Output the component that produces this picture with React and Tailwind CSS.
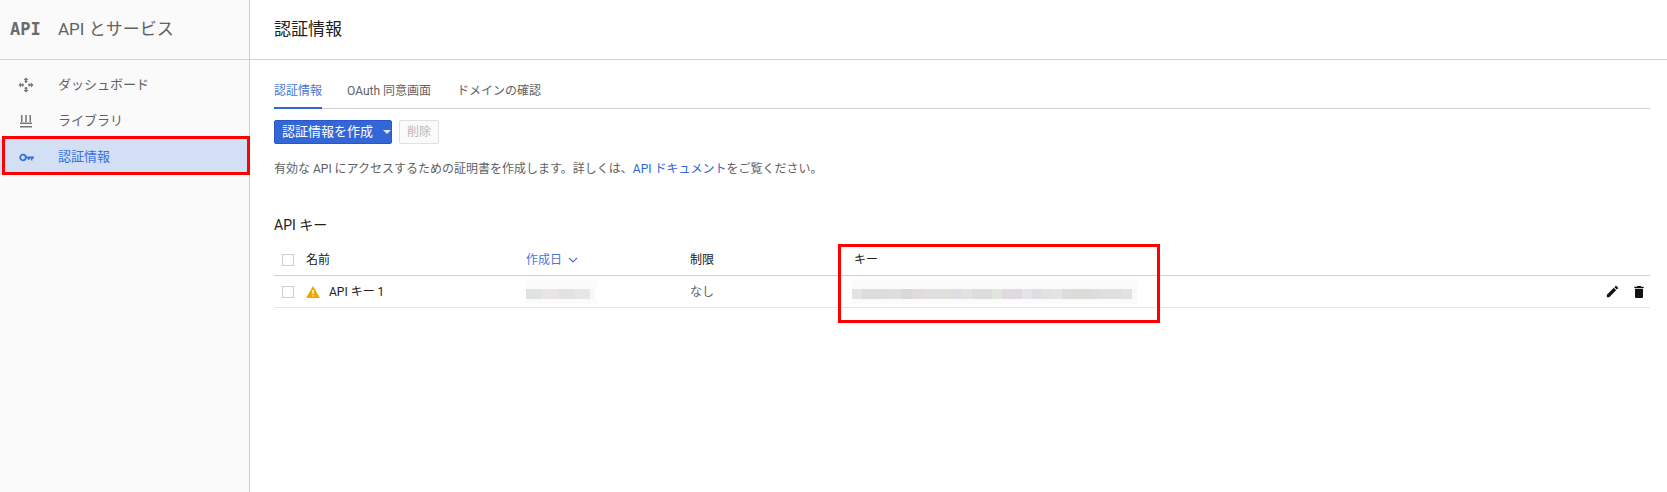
import React from "react";

const font = { };

const keyCells = ["#e3e3e3","#dcdcdc","#dcdcdc","#dddddd","#dedede","#d8d8d8","#dfdce0","#e1dedd","#e0e0de","#dfdfdd","#e0dce2","#e2e2e2","#dcdcdc","#dcdcdc","#e2e4de","#e0d9dd","#dedbe0","#e6e4e6","#e0dde2","#e1e3e3","#e3e5e3","#dcdcdc","#dcdbd7","#dadcdb","#dddddd","#dfdfdf","#dfdfdf","#e2e2e2"];
const dateCells = ["#dde2e2","#dde2e2","#e9e5e5","#e9e5e5","#e2e2e0","#e2e2e0","#e8e6e5","#e8e6e5"];

function Blur({ cells, cell, halo }) {
  return (
    <div className="relative flex flex-col">
      <div className={`${halo} h-[10px] bg-[#fbfbfb]`} />
      <div className="flex h-[10px]">
        {cells.map((c, i) => (
          <div key={i} className="h-full shrink-0" style={{ width: cell, background: c }} />
        ))}
        <div className="w-[5px] h-full bg-[#f8f8f8]" />
      </div>
      <div className={`${halo} h-[5px] bg-[#fbfbfb]`} />
    </div>
  );
}

function Check() {
  return <div className="w-[12px] h-[12px] border border-[#d0d0d0] bg-white shrink-0" />;
}

function NavItem({ icon, label, active }) {
  return (
    <div className={`h-[36px] flex items-center ${active ? "bg-[#d2dff5] text-[#3b6fd8]" : "text-[#616161]"}`}>
      <div className="w-[58px] flex justify-center pl-[0px]">{icon}</div>
      <span className="text-[13px]">{label}</span>
    </div>
  );
}

export default function App() {
  return (
    <div
      className="relative w-[1667px] h-[492px] overflow-hidden bg-white flex text-[#212121]"
      style={{ fontFamily: 'Roboto, "Noto Sans CJK JP", sans-serif' }}
    >
      <aside className="w-[250px] shrink-0 bg-[#fafafa] border-r border-[#d0d0d0] flex flex-col">
        <div className="h-[60px] border-b border-[#d0d0d0] flex items-center pl-[10px]">
          <span
            className="w-[34px] text-[17px] font-bold text-[#6b6b6b] tracking-[0px]"
            style={{ fontFamily: '"DejaVu Sans Mono", monospace' }}
          >
            API
          </span>
          <span className="ml-[14px] text-[17px] text-[#616161]">API とサービス</span>
        </div>
        <nav className="flex flex-col pt-[7px]">
          <div className="h-[36px]">
            <NavItem
              label="ダッシュボード"
              icon={
                <svg width="16" height="16" viewBox="0 0 16 16" fill="#757575" className="-ml-[6px]">
                  <path d="M8 .5 10.5 3h-5zM8 15.5 5.500 13h5zM.5 8 3 5.500v5zM15.500 8 13 10.500v-5z" />
                  <circle cx="8" cy="4.500" r="1.400" />
                  <circle cx="8" cy="11.500" r="1.400" />
                  <circle cx="4.500" cy="8" r="1.400" />
                  <circle cx="11.500" cy="8" r="1.400" />
                </svg>
              }
            />
          </div>
          <NavItem
            label="ライブラリ"
            icon={
              <svg width="14" height="14" viewBox="0 0 14 14" fill="#757575" className="-ml-[6px]">
                <path d="M2 1h1.500v7H2zM6.250 1h1.500v7h-1.500zM10.500 1H12v7h-1.500zM1 8.500h12V10H1zM1 12h12v1.500H1z" />
              </svg>
            }
          />
          <NavItem
            active
            label="認証情報"
            icon={
              <svg width="15" height="9" viewBox="0 0 15 9" fill="none" className="-ml-[6px]">
                <circle cx="4" cy="4.500" r="2.800" stroke="#3b6fd8" strokeWidth="1.800" />
                <path d="M6.500 3.500H15v2h-1.500V7.500H12V5.500h-1.500V7H9V5.500H6.500z" fill="#3b6fd8" />
              </svg>
            }
          />
        </nav>
      </aside>

      <main className="flex-1 flex flex-col min-w-0">
        <header className="h-[60px] shrink-0 border-b border-[#d0d0d0] flex items-center pl-[24px]">
          <h1 className="text-[17px] text-[#212121]">認証情報</h1>
        </header>

        <div className="pl-[24px] pr-[17px] flex flex-col">
          <div className="mt-[19px] h-[30px] border-b border-[#d0d0d0] flex items-start text-[12px] text-[#616161]">
            <div className="w-[48px] h-[30px] border-b-2 border-[#3367d6] text-[#4a76d8] leading-[24px]">認証情報</div>
            <div className="ml-[25px] leading-[24px]">OAuth 同意画面</div>
            <div className="ml-[26px] leading-[24px]">ドメインの確認</div>
          </div>

          <div className="mt-[11px] flex items-center">
            <button className="w-[118px] h-[24px] rounded-[2px] bg-[#3367d6] border border-[#2a56c6] text-white text-[13px] flex items-center pl-[7px]">
              認証情報を作成
              <span className="ml-[10px] w-0 h-0 border-x-[4px] border-x-transparent border-t-[4px] border-t-[#dfe7f8]" />
            </button>
            <button className="ml-[7px] w-[40px] h-[24px] rounded-[2px] border border-[#e0e0e0] bg-[#fafafa] text-[#b8b8b8] text-[12px]">
              削除
            </button>
          </div>

          <p className="mt-[15px] text-[12px] leading-[20px] text-[#616161]">
            有効な API にアクセスするための証明書を作成します。詳しくは、
            <span className="text-[#3367d6]">API ドキュメント</span>
            をご覧ください。
          </p>

          <h2 className="mt-[36px] text-[14px] leading-[20px] text-[#212121]">API キー</h2>

          <div className="mt-[10px] h-[31px] border-b border-[#d0d0d0] flex items-center text-[12px] text-[#212121]">
            <div className="pl-[8px] w-[32px]"><Check /></div>
            <div className="w-[220px]">名前</div>
            <div className="w-[164px] flex items-center text-[#4a76d8]">
              作成日
              <svg width="10" height="6" viewBox="0 0 10 6" className="ml-[6px]" fill="none">
                <path d="M1 1l4 4 4-4" stroke="#4a76d8" strokeWidth="1.200" />
              </svg>
            </div>
            <div className="w-[164px]">制限</div>
            <div>キー</div>
          </div>

          <div className="h-[32px] border-b border-[#e6e6e6] flex items-center text-[12px]">
            <div className="pl-[8px] w-[32px]"><Check /></div>
            <div className="w-[220px] flex items-center">
              <svg width="14" height="12" viewBox="0 0 14 12">
                <path d="M7 0 14 12H0z" fill="#f2a600" />
                <path d="M6.300 4h1.400v4H6.300zM6.300 9h1.400v1.400H6.300z" fill="#fff" />
              </svg>
              <span className="ml-[9px]">API キー 1</span>
            </div>
            <div className="w-[164px]">
              <Blur cells={dateCells} cell={8} halo="w-[72px]" />
            </div>
            <div className="w-[162px] text-[#616161]">なし</div>
            <div>
              <Blur cells={keyCells} cell={10} halo="w-[285px]" />
            </div>
            <div className="ml-auto flex items-center pr-[3px]">
              <svg width="15" height="15" viewBox="0 0 24 24" fill="#111">
                <path d="M3 17.250V21h3.750L17.810 9.940l-3.750-3.750L3 17.250zM20.710 7.040a1 1 0 0 0 0-1.410l-2.340-2.340a1 1 0 0 0-1.410 0l-1.830 1.830 3.750 3.750 1.830-1.830z" />
              </svg>
              <svg width="16" height="16" viewBox="0 0 24 24" fill="#111" className="ml-[11px]">
                <path d="M6 19c0 1.100.9 2 2 2h8c1.100 0 2-.9 2-2V7H6v12zM19 4h-3.500l-1-1h-5l-1 1H5v2h14V4z" />
              </svg>
            </div>
          </div>
        </div>
      </main>

      <div className="absolute left-[2px] top-[136px] w-[248px] h-[39px] border-[3px] border-[#fe0000]" />
      <div className="absolute left-[838px] top-[244px] w-[322px] h-[79px] border-[3px] border-[#fe0000]" />
    </div>
  );
}
